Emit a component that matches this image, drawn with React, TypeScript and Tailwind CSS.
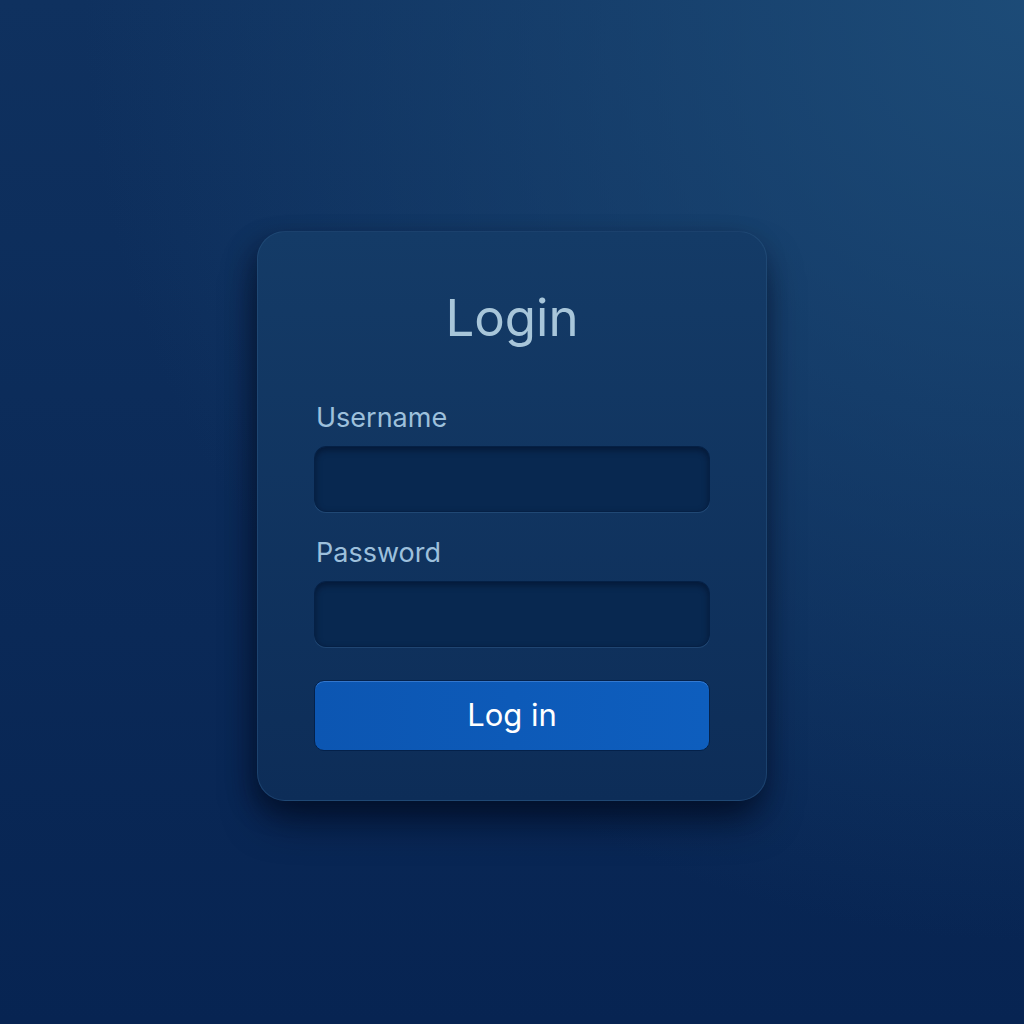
export default function App() {
  return (
    <div
      className="w-full h-[1024px] pt-[8px] flex items-center justify-center bg-[#0a2a58] bg-[image:radial-gradient(ellipse_at_top_right,rgba(30,78,122,0.9)_0%,rgba(30,78,122,0)_65%),linear-gradient(to_bottom,#0f315f,#072452)]"
      style={{ fontFamily: "Inter, Lato, sans-serif" }}
    >
      <div className="w-[510px] h-[570px] rounded-[28px] bg-gradient-to-b from-[#143b67] to-[#0d2d58] border border-[#2a5582]/50 shadow-[0_24px_40px_-8px_rgba(0,10,30,0.7),-6px_10px_24px_rgba(0,10,30,0.4)] px-[56px] pt-[52px] flex flex-col">
        <h1 className="text-center text-[51px] leading-[68px] text-[#a8c6da]">Login</h1>

        <label className="mt-[49px] pl-[2px] text-[27px] leading-[34px] text-[#9dc0dc]">Username</label>
        <div className="mt-[11px] h-[66px] rounded-[12px] bg-[#082850] border border-[#052045] shadow-[inset_0_3px_6px_rgba(0,10,30,0.5),0_1px_0_rgba(80,130,180,0.25)]" />

        <label className="mt-[24px] pl-[2px] text-[27px] leading-[34px] text-[#9dc0dc]">Password</label>
        <div className="mt-[11px] h-[66px] rounded-[12px] bg-[#082850] border border-[#052045] shadow-[inset_0_3px_6px_rgba(0,10,30,0.5),0_1px_0_rgba(80,130,180,0.25)]" />

        <button className="mt-[33px] h-[71px] rounded-[10px] bg-gradient-to-r from-[#0c56b2] to-[#0e5ebe] border border-[#04214a] shadow-[inset_0_1px_0_rgba(90,150,230,0.5)] text-white text-[31px]">
          Log in
        </button>
      </div>
    </div>
  );
}
